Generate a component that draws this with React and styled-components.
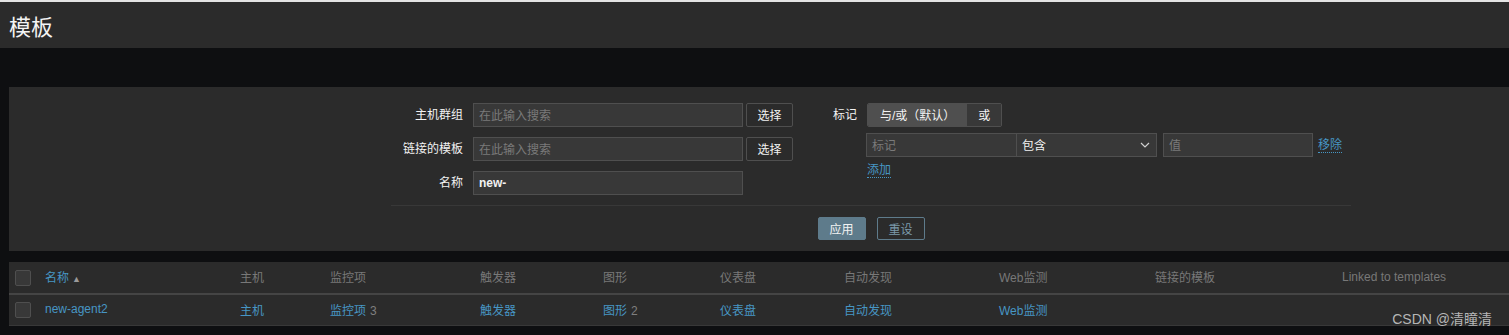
import React from "react";
import styled, { createGlobalStyle } from "styled-components";

const GlobalStyle = createGlobalStyle`
  body {
    margin: 0;
    background: #0e0f11;
    font-family: "Liberation Sans", "Noto Sans CJK SC", sans-serif;
    font-size: 12px;
    color: #f2f2f2;
  }
`;

const Page = styled.div`
  position: relative;
  min-height: 335px;
  border-top: 2px solid #e4e4e4;
  overflow: hidden;
`;

const Header = styled.header`
  height: 46px;
  background: #2b2b2b;
  display: flex;
  align-items: center;
  padding-left: 9px;
`;

const Title = styled.h1`
  margin: 0 0 1px;
  font-size: 22px;
  font-weight: normal;
  color: #f4f4f4;
  font-family: "Noto Sans CJK SC", sans-serif;
`;

const FilterPanel = styled.section`
  margin: 39px 0 0 9px;
  background: #2b2b2b;
  padding: 16px 0 11px 382px;
`;

const FilterForm = styled.div`
  width: 960px;
`;

const Columns = styled.div`
  display: grid;
  grid-template-columns: 430px 1fr;
`;

const Column = styled.div`
  display: flex;
  flex-direction: column;
  gap: ${(p) => p.$gap || 10}px;
`;

const Row = styled.div`
  display: flex;
  align-items: center;
`;

const Label = styled.div`
  width: ${(p) => p.$width}px;
  box-sizing: border-box;
  padding-right: 10px;
  text-align: right;
  color: #f2f2f2;
  flex-shrink: 0;
  line-height: 14px;
  padding-bottom: 1px;
`;

const Input = styled.div`
  box-sizing: border-box;
  width: ${(p) => p.$width}px;
  height: 24px;
  background: #383838;
  border: 1px solid #4f4f4f;
  padding: 0 5px 1px;
  display: flex;
  align-items: center;
  color: ${(p) => (p.$placeholder ? "#7a7a7a" : "#f2f2f2")};
  font-weight: ${(p) => (p.$bold ? "bold" : "normal")};
  margin-left: ${(p) => p.$ml || 0}px;
`;

const Select = styled(Input)`
  justify-content: space-between;
  padding-right: 6px;
`;

const SelectButton = styled.div`
  box-sizing: border-box;
  width: 47px;
  height: 24px;
  margin-left: 3px;
  padding-bottom: 1px;
  background: #2b2b2b;
  border: 1px solid #4f4f4f;
  border-radius: 2px;
  display: flex;
  align-items: center;
  justify-content: center;
  color: #f2f2f2;
`;

const RadioGroup = styled.div`
  display: flex;
  height: 24px;
  box-sizing: border-box;
  border: 1px solid #4f4f4f;
  border-radius: 2px;
  overflow: hidden;
`;

const RadioItem = styled.div`
  padding: 0 ${(p) => p.$pad}px 1px;
  display: flex;
  align-items: center;
  background: ${(p) => (p.$active ? "#4f4f4f" : "#383838")};
  color: #f2f2f2;
`;

const DottedLink = styled.a`
  color: #4796c4;
  text-decoration: none;
  border-bottom: 1px dotted #4796c4;
  line-height: 14px;
  margin-left: ${(p) => p.$ml || 0}px;
  cursor: pointer;
`;

const Separator = styled.div`
  height: 1px;
  background: #383838;
  margin: 10px 0 11px;
`;

const Actions = styled.div`
  display: flex;
  justify-content: center;
  gap: 11px;
`;

const ActionButton = styled.button`
  box-sizing: border-box;
  width: 48px;
  height: 23px;
  border-radius: 2px;
  font: inherit;
  border: 1px solid #5e7b8b;
  background: ${(p) => (p.$primary ? "#5e7b8b" : "transparent")};
  color: ${(p) => (p.$primary ? "#f2f2f2" : "#7c9aaa")};
  padding: 0 0 1px;
`;

const Table = styled.div`
  margin: 11px 0 0 9px;
  background: #2b2b2b;
`;

const TableRow = styled.div`
  display: grid;
  grid-template-columns: 36px 195px 90px 150px 123px 117px 124px 155px 156px 187px 1fr;
  align-items: center;
  height: ${(p) => (p.$head ? 31 : 30)}px;
  border-bottom: ${(p) => (p.$head ? "2px solid #454545" : "1px solid #383838")};
`;

const Cell = styled.div`
  color: ${(p) => (p.$link ? "#4796c4" : "#787878")};
  white-space: nowrap;
  padding-bottom: 2px;
`;

const Count = styled.span`
  color: #7f7f7f;
  margin-left: 4px;
`;

const Arrow = styled.span`
  color: #9a9a9a;
  font-size: 9px;
  margin-left: 3px;
`;

const Checkbox = styled.div`
  width: 14px;
  height: 14px;
  margin-left: 6px;
  background: #383838;
  border: 1px solid #4f4f4f;
  border-radius: 2px;
`;

const Watermark = styled.div`
  position: absolute;
  right: 17px;
  bottom: 9px;
  font-size: 14px;
  color: rgba(220, 220, 220, 0.8);
`;

const Chevron = () => (
  <svg width="10" height="6" viewBox="0 0 10 6">
    <path d="M1 1l4 4 4-4" fill="none" stroke="#d0d0d0" strokeWidth="1.2" />
  </svg>
);

const headers = ["主机", "监控项", "触发器", "图形", "仪表盘", "自动发现", "Web监测", "链接的模板", "Linked to templates"];

const App = () => {
  return (
    <Page>
      <GlobalStyle />
      <Header>
        <Title>模板</Title>
      </Header>

      <FilterPanel>
        <FilterForm>
          <Columns>
            <Column>
              <Row>
                <Label $width={82}>主机群组</Label>
                <Input $width={270} $placeholder>在此输入搜索</Input>
                <SelectButton>选择</SelectButton>
              </Row>
              <Row>
                <Label $width={82}>链接的模板</Label>
                <Input $width={270} $placeholder>在此输入搜索</Input>
                <SelectButton>选择</SelectButton>
              </Row>
              <Row>
                <Label $width={82}>名称</Label>
                <Input $width={270} $bold>new-</Input>
              </Row>
            </Column>

            <Column $gap={6}>
              <Row>
                <Label $width={46}>标记</Label>
                <RadioGroup>
                  <RadioItem $active $pad={12}>与/或（默认）</RadioItem>
                  <RadioItem $pad={11}>或</RadioItem>
                </RadioGroup>
              </Row>
              <Row>
                <Label $width={45} />
                <Input $width={151} $placeholder>标记</Input>
                <Select $width={141} $ml={-1}>
                  包含
                  <Chevron />
                </Select>
                <Input $width={150} $ml={6} $placeholder>值</Input>
                <DottedLink $ml={5}>移除</DottedLink>
              </Row>
              <Row>
                <Label $width={46} />
                <DottedLink>添加</DottedLink>
              </Row>
            </Column>
          </Columns>

          <Separator />

          <Actions>
            <ActionButton $primary>应用</ActionButton>
            <ActionButton>重设</ActionButton>
          </Actions>
        </FilterForm>
      </FilterPanel>

      <Table>
        <TableRow $head>
          <Checkbox />
          <Cell $link>
            名称<Arrow>▲</Arrow>
          </Cell>
          {headers.map((h) => (
            <Cell key={h}>{h}</Cell>
          ))}
        </TableRow>
        <TableRow>
          <Checkbox />
          <Cell $link>new-agent2</Cell>
          <Cell $link>主机</Cell>
          <Cell $link>
            监控项<Count>3</Count>
          </Cell>
          <Cell $link>触发器</Cell>
          <Cell $link>
            图形<Count>2</Count>
          </Cell>
          <Cell $link>仪表盘</Cell>
          <Cell $link>自动发现</Cell>
          <Cell $link>Web监测</Cell>
          <Cell />
          <Cell />
        </TableRow>
      </Table>

      <Watermark>CSDN @清瞳清</Watermark>
    </Page>
  );
};

export default App;
